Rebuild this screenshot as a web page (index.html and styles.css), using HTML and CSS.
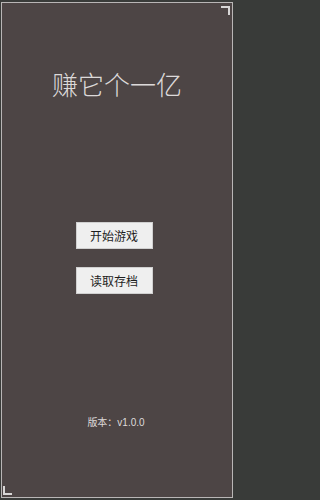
FILE: index.html
```html
<!DOCTYPE html>
<html lang="zh">
<head>
<meta charset="utf-8">
<link rel="stylesheet" href="styles.css">
</head>
<body>
<div class="frame">
  <span class="corner corner-tr"></span>
  <span class="corner corner-bl"></span>
  <h1 class="title">赚它个一亿</h1>
  <div class="menu">
    <button class="btn">开始游戏</button>
    <button class="btn">读取存档</button>
  </div>
  <div class="version">版本：v1.0.0</div>
</div>
</body>
</html>
```

FILE: styles.css
```css
html, body {
  margin: 0;
  padding: 0;
  height: 100%;
  background: #393b39;
}
body {
  font-family: "Noto Sans CJK SC", "Noto Sans", sans-serif;
}
.frame {
  position: relative;
  box-sizing: border-box;
  margin: 2px 0 2px 1px;
  width: 232px;
  height: 496px;
  border: 1px solid #b9b6b6;
  background: #4d4545;
  display: flex;
  flex-direction: column;
  align-items: center;
}
.corner {
  position: absolute;
  width: 7px;
  height: 7px;
  border-color: #d8d6d6;
  border-style: solid;
  border-width: 0;
}
.corner-tr {
  top: 3px;
  right: 2px;
  border-top-width: 2px;
  border-right-width: 2px;
}
.corner-bl {
  bottom: 2px;
  left: 1px;
  border-bottom-width: 2px;
  border-left-width: 2px;
}
.title {
  margin: 66px 0 0 0;
  font-size: 26px;
  line-height: 30px;
  font-weight: 300;
  color: #dcd9d9;
  letter-spacing: 0;
}
.menu {
  margin: 123px 6px 0 0;
  display: flex;
  flex-direction: column;
  gap: 18px;
}
.btn {
  width: 77px;
  height: 27px;
  padding: 0;
  border: 1px solid #d0d0d0;
  background: #efefef;
  color: #1e1e1e;
  font-family: "Noto Sans CJK SC", "Noto Sans", sans-serif;
  font-size: 12px;
  line-height: 25px;
}
.version {
  margin: 122px 2px 0 0;
  font-size: 10px;
  line-height: 14px;
  color: #dedada;
  font-family: "Liberation Sans", "Noto Sans CJK SC", sans-serif;
}
```
